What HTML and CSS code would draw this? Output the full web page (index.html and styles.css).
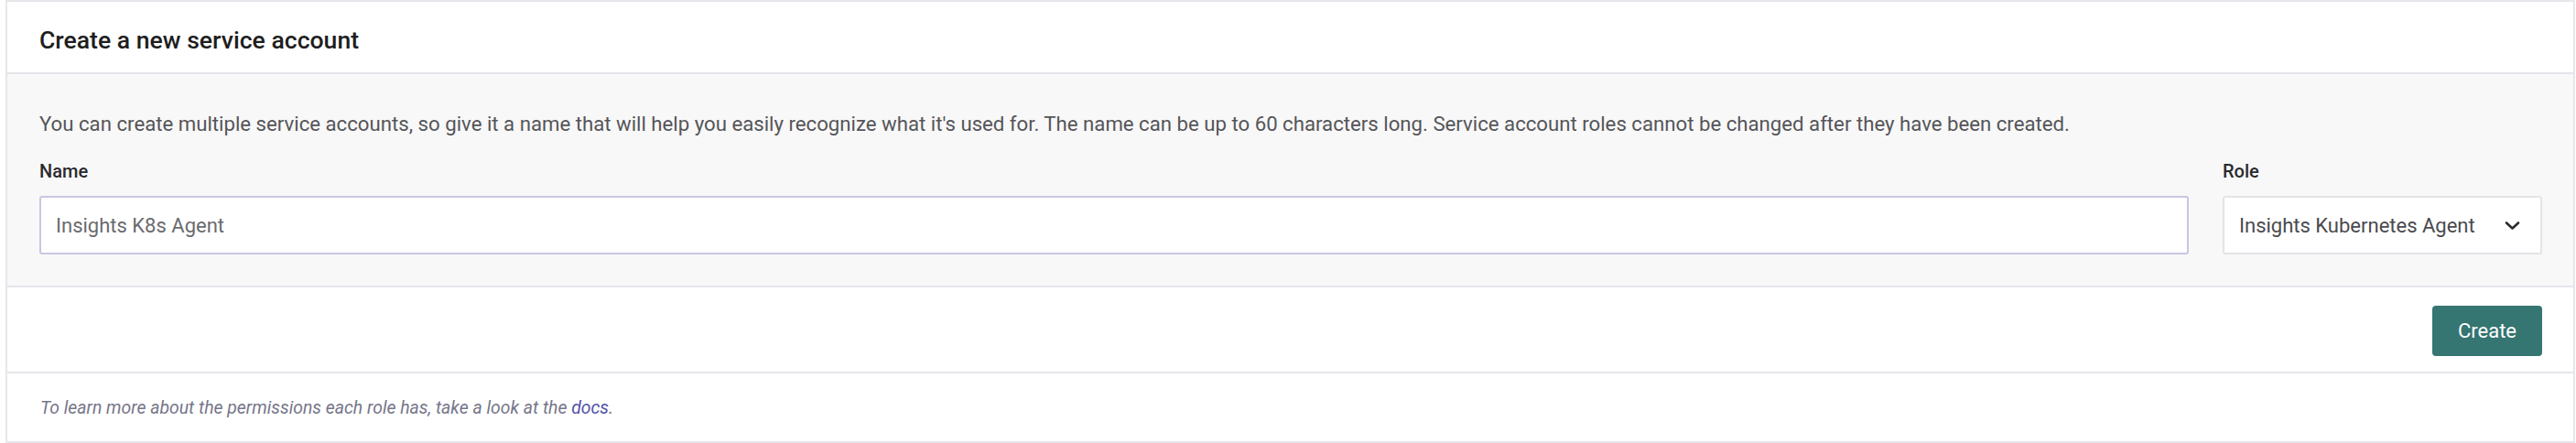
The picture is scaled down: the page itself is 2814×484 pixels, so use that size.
FILE: index.html
```html
<!DOCTYPE html>
<html lang="en">
<head>
<meta charset="utf-8">
<title>Create a new service account</title>
<link rel="stylesheet" href="styles.css">
</head>
<body>
<div class="card">
  <header class="card-header">
    <h2 class="card-title">Create a new service account</h2>
  </header>
  <section class="card-body">
    <p class="desc">You can create multiple service accounts, so give it a name that will help you easily recognize what it's used for. The name can be up to 60 characters long. Service account roles cannot be changed after they have been created.</p>
    <div class="fields">
      <div class="field">
        <label class="field-label" for="sa-name">Name</label>
        <input class="text-input" id="sa-name" type="text" value="Insights K8s Agent">
      </div>
      <div class="field">
        <label class="field-label">Role</label>
        <div class="select" role="combobox" aria-expanded="false">
          <span class="select-value">Insights Kubernetes Agent</span>
          <svg class="chevron" width="17" height="11" viewBox="0 0 17 11" aria-hidden="true"><path d="M2 2.5 L8.5 8.5 L15 2.5" fill="none" stroke="#2b2b2b" stroke-width="2.6" stroke-linecap="round" stroke-linejoin="round"/></svg>
        </div>
      </div>
    </div>
  </section>
  <div class="card-actions">
    <button class="btn-primary" type="button">Create</button>
  </div>
  <footer class="card-footer">
    <p class="hint">To learn more about the permissions each role has, take a look at the <a class="hint-link" href="#">docs</a>.</p>
  </footer>
</div>
</body>
</html>
```

FILE: styles.css
```css
* { box-sizing: border-box; }

html, body {
  margin: 0;
  padding: 0;
  background: #ffffff;
}

body {
  font-family: Roboto, "Liberation Sans", Arial, sans-serif;
  color: #222;
}

.card {
  margin-left: 6px;
  width: 2807px;
  height: 484px;
  border: 2px solid #e6e6eb;
  display: flex;
  flex-direction: column;
  background: #fff;
}

.card-header {
  height: 79px;
  padding: 6px 35px 0;
  display: flex;
  align-items: center;
  border-bottom: 2px solid #e4e4ea;
}

.card-title {
  margin: 0;
  font-size: 26.6px;
  font-weight: 500;
  color: #1e1e1e;
  line-height: 32px;
}

.card-body {
  background: #f8f8f8;
  padding: 38px 34px 34px 35px;
  border-bottom: 2px solid #e6e6eb;
}

.desc {
  margin: 0 0 21px;
  font-size: 22.2px;
  line-height: 32px;
  color: #555558;
}

.fields {
  display: grid;
  grid-template-columns: 1fr 349px;
  column-gap: 37px;
}

.field {
  display: flex;
  flex-direction: column;
}

.field-label {
  font-size: 20px;
  line-height: 30px;
  font-weight: 500;
  color: #2a2a2e;
  margin-bottom: 12px;
}

.text-input {
  height: 64px;
  width: 100%;
  border: 2px solid #c9c6e2;
  border-radius: 3px;
  background: #fff;
  padding: 0 16px;
  font-family: Roboto, "Liberation Sans", Arial, sans-serif;
  font-size: 22px;
  color: #6a6a6e;
  outline: none;
}

.select {
  height: 64px;
  border: 2px solid #e4e4e8;
  border-radius: 3px;
  background: #fff;
  padding: 0 22px 0 16px;
  display: flex;
  align-items: center;
  justify-content: space-between;
}

.select-value {
  font-size: 22px;
  color: #4a4a4e;
}

.chevron {
  display: block;
}

.card-actions {
  height: 94px;
  padding: 20px 34px 0;
  display: flex;
  justify-content: flex-end;
  align-items: flex-start;
  border-bottom: 2px solid #e6e6eb;
}

.btn-primary {
  height: 55px;
  padding: 0 28px;
  background: #357572;
  border: none;
  border-radius: 4px;
  color: #fff;
  font-family: Roboto, "Liberation Sans", Arial, sans-serif;
  font-size: 22px;
  cursor: pointer;
}

.card-footer {
  flex: 1;
  padding: 0 35px 0 36px;
  display: flex;
  align-items: center;
}

.hint {
  margin: 0;
  font-size: 19.4px;
  font-style: italic;
  color: #76768a;
}

.hint-link {
  color: #5252a8;
  text-decoration: none;
}
```
